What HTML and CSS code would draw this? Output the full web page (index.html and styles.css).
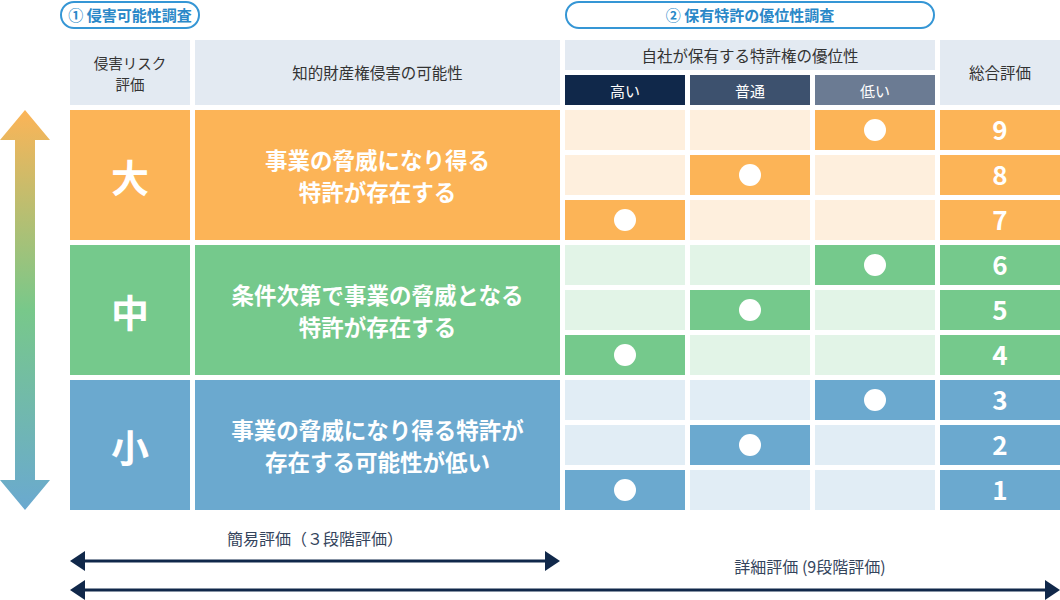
FILE: index.html
```html
<!DOCTYPE html>
<html lang="ja">
<head>
<meta charset="utf-8">
<title>侵害リスク評価</title>
<link rel="stylesheet" href="styles.css">
</head>
<body>
<div class="board">
  <div class="pill pill-1">① 侵害可能性調査</div>
  <div class="pill pill-2">② 保有特許の優位性調査</div>

  <div class="hd hd-risk">侵害リスク<br>評価</div>
  <div class="hd hd-poss">知的財産権侵害の可能性</div>
  <div class="hd hd-adv">自社が保有する特許権の優位性</div>
  <div class="hd hd-total">総合評価</div>
  <div class="sub sub-hi">高い</div>
  <div class="sub sub-mid">普通</div>
  <div class="sub sub-lo">低い</div>

  <div class="vert">
    <svg width="50" height="400" viewBox="0 0 50 400">
      <defs>
        <linearGradient id="vg" x1="0" y1="0" x2="0" y2="1">
          <stop offset="0" stop-color="#fcb457"/>
          <stop offset="0.5" stop-color="#78c88a"/>
          <stop offset="1" stop-color="#6aa9d0"/>
        </linearGradient>
      </defs>
      <polygon points="25,0 50,30 35,30 35,370 50,370 25,400 0,370 15,370 15,30 0,30" fill="url(#vg)"/>
    </svg>
  </div>

  <div class="lvl o r-a">大</div>
  <div class="desc o r-a">事業の脅威になり得る<br>特許が存在する</div>
  <div class="lvl g r-b">中</div>
  <div class="desc g r-b">条件次第で事業の脅威となる<br>特許が存在する</div>
  <div class="lvl b r-c">小</div>
  <div class="desc b r-c">事業の脅威になり得る特許が<br>存在する可能性が低い</div>

  <div class="matrix">
    <div class="cell ol"></div><div class="cell ol"></div><div class="cell o"><span class="dot"></span></div><div class="score o">9</div>
    <div class="cell ol"></div><div class="cell o"><span class="dot"></span></div><div class="cell ol"></div><div class="score o">8</div>
    <div class="cell o"><span class="dot"></span></div><div class="cell ol"></div><div class="cell ol"></div><div class="score o">7</div>

    <div class="cell gl"></div><div class="cell gl"></div><div class="cell g"><span class="dot"></span></div><div class="score g">6</div>
    <div class="cell gl"></div><div class="cell g"><span class="dot"></span></div><div class="cell gl"></div><div class="score g">5</div>
    <div class="cell g"><span class="dot"></span></div><div class="cell gl"></div><div class="cell gl"></div><div class="score g">4</div>

    <div class="cell bl"></div><div class="cell bl"></div><div class="cell b"><span class="dot"></span></div><div class="score b">3</div>
    <div class="cell bl"></div><div class="cell b"><span class="dot"></span></div><div class="cell bl"></div><div class="score b">2</div>
    <div class="cell b"><span class="dot"></span></div><div class="cell bl"></div><div class="cell bl"></div><div class="score b">1</div>
  </div>
</div>

<div class="bottom">
  <div class="lbl lbl-1">簡易評価（３段階評価）</div>
  <div class="arr arr-1">
    <svg width="490" height="20" viewBox="0 0 490 20">
      <rect x="12" y="8.5" width="466" height="3" fill="#10284a"/>
      <polygon points="0,10 15,0 15,20" fill="#10284a"/>
      <polygon points="490,10 475,0 475,20" fill="#10284a"/>
    </svg>
  </div>
  <div class="lbl lbl-2">詳細評価 (9段階評価)</div>
  <div class="arr arr-2">
    <svg width="990" height="20" viewBox="0 0 990 20">
      <rect x="12" y="8.5" width="966" height="3" fill="#10284a"/>
      <polygon points="0,10 15,0 15,20" fill="#10284a"/>
      <polygon points="990,10 975,0 975,20" fill="#10284a"/>
    </svg>
  </div>
</div>
</body>
</html>
```

FILE: styles.css
```css
* { box-sizing: border-box; }
html, body { margin: 0; padding: 0; background: #fff; }
body {
  width: 1060px;
  height: 600px;
  overflow: hidden;
  font-family: "Noto Sans CJK JP", "Noto Sans", sans-serif;
  color: #333;
}

.board {
  display: grid;
  grid-template-columns: 65px 120px 365px 120px 120px 120px 120px;
  grid-template-rows: 35px 30px 30px repeat(9, 40px);
  gap: 5px;
}

.pill {
  grid-row: 1;
  align-self: start;
  margin-top: 1px;
  height: 28px;
  border: 2px solid #3596d5;
  border-radius: 14px;
  color: #2a88c8;
  font-weight: 700;
  font-size: 15px;
  line-height: 24px;
  text-align: center;
}
.pill-1 { grid-column: 2; justify-self: center; width: 140px; }
.pill-2 { grid-column: 4 / 7; }

.hd {
  background: #e3eaf2;
  font-size: 15.5px;
  line-height: 21px;
  display: flex;
  align-items: center;
  justify-content: center;
  text-align: center;
}
.hd-risk { grid-column: 2; grid-row: 2 / 4; font-size: 14.5px; }
.hd-poss { grid-column: 3; grid-row: 2 / 4; }
.hd-adv { grid-column: 4 / 7; grid-row: 2; }
.hd-total { grid-column: 7; grid-row: 2 / 4; }

.sub {
  grid-row: 3;
  color: #fff;
  font-size: 15px;
  display: flex;
  align-items: center;
  justify-content: center;
}
.sub-hi { grid-column: 4; background: #10284a; }
.sub-mid { grid-column: 5; background: #3d516e; }
.sub-lo { grid-column: 6; background: #6b7b93; }

.vert { grid-column: 1; grid-row: 4 / 13; width: 50px; }
.vert svg { display: block; }

.matrix {
  grid-column: 4 / 8;
  grid-row: 4 / 13;
  display: grid;
  grid-template-columns: repeat(4, 120px);
  grid-template-rows: repeat(9, 40px);
  gap: 5px;
}

.lvl, .desc, .cell, .score {
  display: flex;
  align-items: center;
  justify-content: center;
  color: #fff;
}
.lvl { grid-column: 2; font-size: 38px; font-weight: 700; }
.desc { grid-column: 3; font-size: 22.5px; font-weight: 700; line-height: 32px; text-align: center; }
.r-a { grid-row: 4 / 7; }
.r-b { grid-row: 7 / 10; }
.r-c { grid-row: 10 / 13; }
.score { font-size: 26px; font-weight: 700; padding-bottom: 3px; }

.o { background: #fcb457; }
.ol { background: #feefdd; }
.g { background: #75c98c; }
.gl { background: #e2f4e7; }
.b { background: #6ba9cf; }
.bl { background: #e1edf5; }

.dot {
  width: 22px;
  height: 22px;
  border-radius: 50%;
  background: #fff;
}

.bottom {
  display: grid;
  grid-template-columns: 490px 500px;
  margin-left: 70px;
  padding-top: 18px;
}
.lbl { font-size: 16px; line-height: 20px; color: #34445c; text-align: center; }
.lbl-1 { grid-column: 1; grid-row: 1; }
.arr-1 { grid-column: 1; grid-row: 2; margin-top: 3px; align-self: start; height: 20px; }
.lbl-2 { grid-column: 2; grid-row: 2; margin-top: 8px; }
.arr-2 { grid-column: 1 / 3; grid-row: 3; margin-top: 4px; height: 20px; }
.arr svg { display: block; }
```
